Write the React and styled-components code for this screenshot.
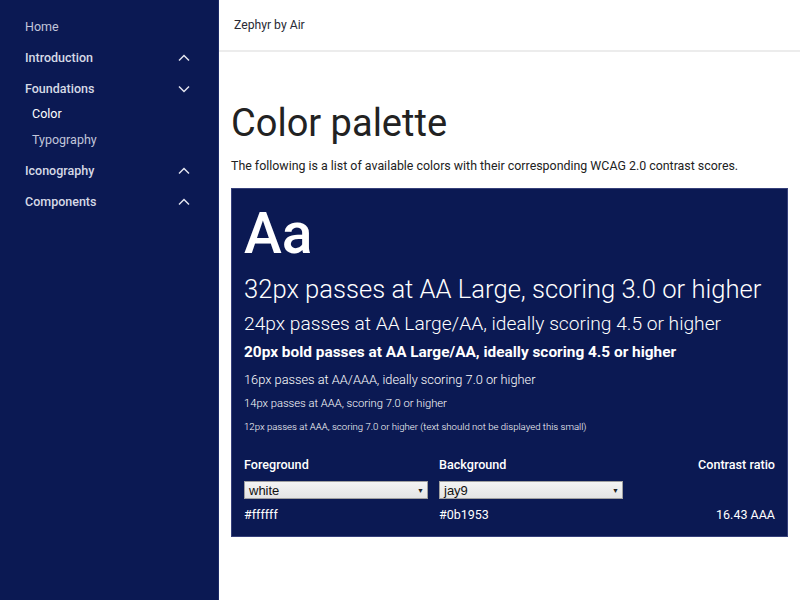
import React from "react";
import styled, { createGlobalStyle } from "styled-components";

const GlobalStyle = createGlobalStyle`
  html, body {
    margin: 0;
    padding: 0;
    background: #ffffff;
    font-family: Roboto, "Liberation Sans", sans-serif;
  }
  * { box-sizing: border-box; }
`;

const nav = [
  { label: "Home", kind: "link" },
  { label: "Introduction", kind: "group", open: false },
  { label: "Foundations", kind: "group", open: true },
  { label: "Color", kind: "sub", active: true },
  { label: "Typography", kind: "sub" },
  { label: "Iconography", kind: "group", open: false },
  { label: "Components", kind: "group", open: false },
];

// font size, line height and space above for each sample line
const samples = [
  { size: 25.6, lh: 30, gap: 8, text: "32px passes at AA Large, scoring 3.0 or higher" },
  { size: 19.2, lh: 23, gap: 7.5, text: "24px passes at AA Large/AA, ideally scoring 4.5 or higher" },
  { size: 15.4, lh: 18, gap: 8.5, bold: true, text: "20px bold passes at AA Large/AA, ideally scoring 4.5 or higher" },
  { size: 12.8, lh: 15, gap: 10.5, text: "16px passes at AA/AAA, ideally scoring 7.0 or higher" },
  { size: 11.2, lh: 13, gap: 10, text: "14px passes at AAA, scoring 7.0 or higher" },
  { size: 9.6, lh: 11, gap: 11, text: "12px passes at AAA, scoring 7.0 or higher (text should not be displayed this small)" },
];

function Chevron({ down }) {
  return (
    <svg width="12" height="8" viewBox="0 0 12 8" fill="none">
      <path
        d={down ? "M1 1.5 L6 6.5 L11 1.5" : "M1 6.5 L6 1.5 L11 6.5"}
        stroke="#e2e4ee"
        strokeWidth="1.5"
      />
    </svg>
  );
}

export default function App() {
  return (
    <>
      <GlobalStyle />
      <Layout>
        <Sidebar>
          {nav.map((item) => (
            <NavItem key={item.label} $kind={item.kind} $active={item.active}>
              <span>{item.label}</span>
              {item.kind === "group" && <Chevron down={item.open} />}
            </NavItem>
          ))}
        </Sidebar>
        <Main>
          <TopBar>Zephyr by Air</TopBar>
          <Content>
            <Title>Color palette</Title>
            <Lead>
              The following is a list of available colors with their corresponding WCAG 2.0
              contrast scores.
            </Lead>
            <Swatch>
              <Big>Aa</Big>
              {samples.map((s) => (
                <Sample key={s.text} $size={s.size} $lh={s.lh} $gap={s.gap} $bold={s.bold}>
                  {s.text}
                </Sample>
              ))}
              <Controls>
                <Label>Foreground</Label>
                <Label>Background</Label>
                <Label $right>Contrast ratio</Label>
                <Select>
                  <span>white</span>
                  <Arrow>▼</Arrow>
                </Select>
                <Select>
                  <span>jay9</span>
                  <Arrow>▼</Arrow>
                </Select>
                <span />
                <Value>#ffffff</Value>
                <Value>#0b1953</Value>
                <Value $right>16.43 AAA</Value>
              </Controls>
            </Swatch>
          </Content>
        </Main>
      </Layout>
    </>
  );
}

const Layout = styled.div`
  display: flex;
  width: 800px;
  height: 600px;
  overflow: hidden;
`;

const Sidebar = styled.nav`
  width: 219px;
  flex-shrink: 0;
  background: #0b1953;
  border-right: 1px solid #1d2a66;
  padding: 11px 0 0 25px;
  display: flex;
  flex-direction: column;
`;

const NavItem = styled.div`
  display: flex;
  align-items: center;
  justify-content: space-between;
  padding-right: 28px;
  padding-left: ${(p) => (p.$kind === "sub" ? "7px" : "0")};
  height: ${(p) => (p.$kind === "sub" ? "25.5px" : "31px")};
  font-size: 12.5px;
  font-weight: ${(p) => (p.$kind === "group" ? 500 : 400)};
  color: ${(p) =>
    p.$active ? "#ffffff" : p.$kind === "group" ? "#d6d9e6" : "#c2c6da"};
  &:nth-child(4) {
    margin-top: -3px;
  }
  &:nth-child(6) {
    margin-top: 3px;
  }
`;

const Main = styled.main`
  flex: 1;
  display: flex;
  flex-direction: column;
`;

const TopBar = styled.header`
  height: 52px;
  border-bottom: 2px solid #ececec;
  display: flex;
  align-items: center;
  padding-left: 15px;
  font-size: 12.2px;
  color: #2a2a35;
`;

const Content = styled.section`
  padding: 48px 12px 0 12px;
`;

const Title = styled.h1`
  margin: 0;
  font-size: 38px;
  font-weight: 400;
  color: #222222;
  line-height: 46px;
`;

const Lead = styled.p`
  margin: 12px 0 14px;
  font-size: 12.4px;
  line-height: 16px;
  color: #222222;
`;

const Swatch = styled.div`
  background: #0b1953;
  border: 1px solid #36407a;
  padding: 13px 12px 14px 12px;
  color: #ffffff;
`;

const Big = styled.div`
  font-size: 57px;
  font-weight: 500;
  line-height: 64px;
`;

const Sample = styled.div`
  font-size: ${(p) => p.$size}px;
  font-weight: ${(p) => (p.$bold ? 700 : 300)};
  line-height: ${(p) => p.$lh}px;
  margin-top: ${(p) => p.$gap}px;
`;

const Controls = styled.div`
  display: grid;
  grid-template-columns: 195px 195px 1fr;
  margin-top: 25px;
`;

const Label = styled.div`
  font-size: 12.6px;
  font-weight: 500;
  line-height: 15px;
  margin-bottom: 9.5px;
  text-align: ${(p) => (p.$right ? "right" : "left")};
`;

const Select = styled.div`
  width: 184px;
  height: 18px;
  display: flex;
  align-items: center;
  justify-content: space-between;
  padding: 0 3px 0 4px;
  background: linear-gradient(#f4f4f4, #e4e4e4);
  border: 1px solid #a0a0a0;
  color: #111111;
  font-family: "Liberation Sans", Arial, sans-serif;
  font-size: 13px;
`;

const Arrow = styled.span`
  font-size: 7px;
  color: #222222;
`;

const Value = styled.div`
  font-size: 12.5px;
  line-height: 15px;
  margin-top: 7.5px;
  text-align: ${(p) => (p.$right ? "right" : "left")};
`;
